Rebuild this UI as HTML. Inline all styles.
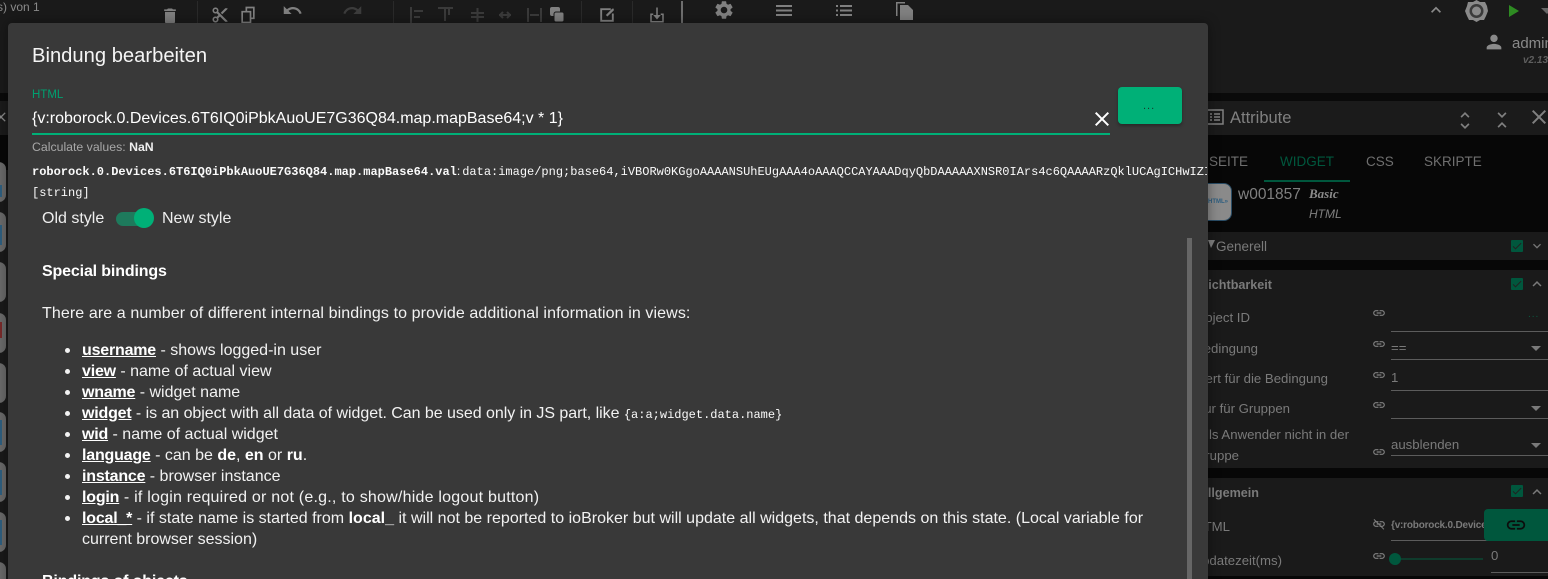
<!DOCTYPE html>
<html><head><meta charset="utf-8"><style>
html,body{margin:0;padding:0;background:#1a1a1a}
#p{position:relative;width:1548px;height:579px;overflow:hidden;background:#1a1a1a;font-family:"Liberation Sans",sans-serif}
.b{position:absolute}
.t{position:absolute;white-space:nowrap;line-height:20px;transform:translateY(-8px)}
svg.i{position:absolute;fill:#808080}
.l{color:#7a7a7a;font-size:13.2px}
.h{color:#7a7a7a;font-size:12.6px;font-weight:bold}
.ln{position:absolute;height:1px;background:#5c5c5c}
.w{color:#f2f2f2;font-size:16px;letter-spacing:0}
.w b{color:#fff}
.w u{font-weight:bold;color:#fff;letter-spacing:-.2px}
.m{font-family:"Liberation Mono",monospace;font-size:12px;color:#fafafa;letter-spacing:0}
.dot{position:absolute;left:65px;width:5px;height:5px;border-radius:50%;background:#f2f2f2}
.tile{position:absolute;left:-14px;width:20px;height:40px;border-radius:7px;background:#6a6a6a}
</style></head><body><div id="p">

<!-- background structure -->
<div class="b" style="left:0;top:93px;width:1548px;height:8px;background:#0a0a0a"></div>
<div class="b" style="left:0;top:101px;width:1548px;height:34px;background:#1b1b1b"></div>
<div class="b" style="left:0;top:135px;width:1548px;height:444px;background:#070707"></div>
<div class="b" style="left:0;top:170px;width:8px;height:409px;background:#1a1a1a"></div>
<div class="tile" style="top:162px"></div><div class="tile" style="top:212px"></div>
<div class="tile" style="top:262px"></div><div class="tile" style="top:313px"></div>
<div class="tile" style="top:363px"></div><div class="tile" style="top:412px"></div>
<div class="tile" style="top:462px"></div><div class="tile" style="top:512px"></div>
<div class="tile" style="top:562px"></div>
<div class="b" style="left:0;top:185px;width:2px;height:12px;background:#2f5f80"></div>
<div class="b" style="left:0;top:225px;width:2px;height:20px;background:#2f5f80"></div>
<div class="b" style="left:0;top:322px;width:2px;height:16px;background:#7a2a2a"></div>
<div class="b" style="left:0;top:420px;width:2px;height:25px;background:#2f5f80"></div>
<div class="b" style="left:0;top:470px;width:2px;height:25px;background:#2f5f80"></div>
<div class="b" style="left:0;top:520px;width:2px;height:25px;background:#2f5f80"></div>
<svg class="i" style="left:-7px;top:109px;fill:#8a8a8a" width="16" height="16" viewBox="0 0 24 24"><path d="M19 6.41L17.59 5 12 10.59 6.41 5 5 6.41 10.59 12 5 17.59 6.41 19 12 13.41 17.59 19 19 17.59 13.41 12z"/></svg>

<!-- top toolbar -->
<div class="t" style="left:-3px;top:5px;font-size:12px;color:#8a8a8a">s) von 1</div>
<svg class="i" style="left:160px;top:5px" width="20" height="22" viewBox="0 0 24 24"><path d="M6 19c0 1.1.9 2 2 2h8c1.1 0 2-.9 2-2V7H6v12zM19 4h-3.5l-1-1h-5l-1 1H5v2h14V4z"/></svg>
<svg class="i" style="left:211px;top:6px" width="18" height="18" viewBox="0 0 24 24"><path d="M9.64 7.64c.23-.5.36-1.05.36-1.64 0-2.21-1.79-4-4-4S2 3.79 2 6s1.79 4 4 4c.59 0 1.14-.13 1.64-.36L10 12l-2.36 2.36C7.14 14.13 6.59 14 6 14c-2.21 0-4 1.79-4 4s1.79 4 4 4 4-1.79 4-4c0-.59-.13-1.14-.36-1.64L12 14l7 7h3v-1L9.64 7.64zM6 8c-1.1 0-2-.89-2-2s.9-2 2-2 2 .89 2 2-.9 2-2 2zm0 12c-1.1 0-2-.89-2-2s.9-2 2-2 2 .89 2 2-.9 2-2 2zM19 3l-6 6 2 2 7-7V3z"/></svg>
<svg class="i" style="left:238px;top:5px" width="20" height="20" viewBox="0 0 24 24"><path d="M9 2h11v15h-4v5H4V7h5V2zm2 2v3h5v8h2V4h-7zM6 9v11h8V9H6z"/></svg>
<svg class="i" style="left:282px;top:0" width="21" height="21" viewBox="0 0 24 24"><path d="M12.5 8c-2.65 0-5.05.99-6.9 2.6L2 7v9h9l-3.62-3.62c1.39-1.16 3.16-1.88 5.12-1.88 3.54 0 6.55 2.31 7.6 5.5l2.37-.78C21.08 11.03 17.15 8 12.5 8z"/></svg>
<svg class="i" style="left:342px;top:0;fill:#3c3c3c" width="21" height="21" viewBox="0 0 24 24"><path d="M18.4 10.6C16.55 8.99 14.15 8 11.5 8c-4.65 0-8.58 3.03-9.96 7.22L3.9 16c1.05-3.19 4.05-5.5 7.6-5.5 1.95 0 3.73.72 5.12 1.88L13 16h9V7l-3.6 3.6z"/></svg>
<div class="b" style="left:197px;top:1px;width:1px;height:22px;background:#2a2a2a"></div>
<div class="b" style="left:393px;top:1px;width:1px;height:22px;background:#2a2a2a"></div>
<div class="b" style="left:581px;top:1px;width:1px;height:22px;background:#2a2a2a"></div>
<div class="b" style="left:632px;top:1px;width:1px;height:22px;background:#2a2a2a"></div>
<svg class="b" style="left:405px;top:2px" width="145" height="22" viewBox="0 0 145 22" fill="none" stroke="#3a3a3a" stroke-width="2"><path d="M6 5v16M9 9h9M9 15h6"/><path d="M33 6h15M40 7v12M44 7v6"/><path d="M66 11h13M66 15h13M72.500 6v14"/><path d="M94 13h12M95 13l3-3M95 13l3 3M105 13l-3-3M105 13l-3 3"/><path d="M123 6v14M136 6v14M125 13h9"/></svg>
<svg class="b" style="left:549px;top:6px" width="16" height="17" viewBox="0 0 16 17"><rect x="1" y="1" width="10" height="9" rx="2" fill="#808080"/><rect x="5" y="6" width="10" height="10" rx="2" fill="#808080" stroke="#1a1a1a"/></svg>
<svg class="i" style="left:598px;top:6px" width="18" height="18" viewBox="0 0 24 24"><path d="M3 3h14v2.500H5.500v13h13V10H21v11H3V3zm7.500 9L19 3.500h2V6l-8.500 8z"/></svg>
<svg class="i" style="left:648px;top:6px" width="18" height="18" viewBox="0 0 24 24"><path d="M11 2h2v10h4l-5 6-5-6h4V2zM3 10h4v2H5v8h14v-8h-2v-2h4v12H3V10z"/></svg>
<div class="b" style="left:681px;top:1px;width:2px;height:22px;background:#6e6e6e"></div>
<svg class="i" style="left:713px;top:-1px" width="22" height="22" viewBox="0 0 24 24"><path d="M19.14 12.94c.04-.3.06-.61.06-.94 0-.32-.02-.64-.07-.94l2.03-1.58c.18-.14.23-.41.12-.61l-1.92-3.32c-.12-.22-.37-.29-.59-.22l-2.39.96c-.5-.38-1.03-.7-1.62-.94l-.36-2.54c-.04-.24-.24-.41-.48-.41h-3.84c-.24 0-.43.17-.47.41l-.36 2.54c-.59.24-1.13.57-1.62.94l-2.39-.96c-.22-.08-.47 0-.59.22L2.74 8.87c-.12.21-.08.47.12.61l2.03 1.58c-.05.3-.09.63-.09.94s.02.64.07.94l-2.03 1.58c-.18.14-.23.41-.12.61l1.92 3.32c.12.22.37.29.59.22l2.39-.96c.5.38 1.03.7 1.62.94l.36 2.54c.05.24.24.41.48.41h3.84c.24 0 .44-.17.47-.41l.36-2.54c.59-.24 1.13-.56 1.62-.94l2.39.96c.22.08.47 0 .59-.22l1.92-3.32c.12-.22.07-.47-.12-.61l-2.01-1.58zM12 15.6c-1.98 0-3.6-1.62-3.6-3.6s1.62-3.6 3.6-3.6 3.6 1.62 3.6 3.6-1.62 3.6-3.6 3.6z"/></svg>
<svg class="b" style="left:776px;top:5px" width="16" height="11" viewBox="0 0 16 11" fill="#808080"><rect y="0" width="16" height="2"/><rect y="4.500" width="16" height="2"/><rect y="9" width="16" height="2"/></svg>
<svg class="b" style="left:836px;top:5px" width="16" height="11" viewBox="0 0 16 11" fill="#808080"><rect y="0" width="2" height="2"/><rect x="4" y="0" width="12" height="2"/><rect y="4.500" width="2" height="2"/><rect x="4" y="4.500" width="12" height="2"/><rect y="9" width="2" height="2"/><rect x="4" y="9" width="12" height="2"/></svg>
<svg class="i" style="left:894px;top:1px" width="20" height="20" viewBox="0 0 20 20"><path d="M2 1h9v1.500H3.500V15H2V1zM6 4h8l5 5v10H6V4z"/></svg>

<!-- top right -->
<svg class="i" style="left:1426px;top:0;fill:#8a8a8a" width="20" height="20" viewBox="0 0 24 24"><path d="M12 8l-6 6 1.41 1.41L12 10.83l4.59 4.58L18 14z"/></svg>
<svg class="b" style="left:1465px;top:0" width="23" height="22" viewBox="0 0 23 22"><polygon points="11.500,0 15,2 20,2 22,6 23,11 21,16 19,20 15,20 11.500,22 8,20 4,20 2,16 0,11 2,6 3,2 8,2" fill="#8a8a8a"/><circle cx="11.500" cy="11" r="7" fill="#3a3a3a"/><circle cx="11.500" cy="11" r="4.500" fill="#8a8a8a"/></svg>
<svg class="b" style="left:1508px;top:4px" width="12" height="14" viewBox="0 0 12 14"><path d="M1 1l10 6-10 6z" fill="#2e8b22"/></svg>
<svg class="b" style="left:1541px;top:8px" width="7" height="6" viewBox="0 0 7 6"><path d="M0 0h12l-6 6z" fill="#666"/></svg>
<svg class="i" style="left:1483px;top:31px;fill:#8a8a8a" width="22" height="22" viewBox="0 0 24 24"><path d="M12 12c2.21 0 4-1.79 4-4s-1.79-4-4-4-4 1.79-4 4 1.79 4 4 4zm0 2c-2.67 0-8 1.34-8 4v2h16v-2c0-2.66-5.33-4-8-4z"/></svg>
<div class="t" style="left:1512px;top:42px;font-size:15px;color:#8a8a8a">admin</div>
<div class="t" style="left:1523px;top:59px;font-size:10px;font-style:italic;font-weight:bold;color:#5f5f5f">v2.13.1</div>

<!-- attribute header -->
<svg class="b" style="left:1206px;top:109px" width="18" height="16" viewBox="0 0 18 16" fill="none" stroke="#808080" stroke-width="1.500"><rect x="1" y="1" width="16" height="14"/><path d="M4 5h2M8 5h6M4 8h2M8 8h6M4 11h2M8 11h6"/></svg>
<div class="t" style="left:1230px;top:116px;font-size:16.500px;color:#808080">Attribute</div>
<svg class="i" style="left:1458px;top:111px" width="14" height="12" viewBox="0 0 14 12"><path d="M7 1L2.500 5.500l1.200 1.200L7 3.400l3.300 3.300 1.200-1.200z"/></svg>
<svg class="i" style="left:1458px;top:122px" width="14" height="10" viewBox="0 0 14 10"><path d="M7 7L2.500 2.500l1.200-1.200L7 4.600l3.300-3.300 1.200 1.200z"/></svg>
<svg class="i" style="left:1495px;top:111px" width="14" height="10" viewBox="0 0 14 10"><path d="M7 7L2.500 2.500l1.200-1.200L7 4.600l3.300-3.300 1.200 1.200z"/></svg>
<svg class="i" style="left:1495px;top:121px" width="14" height="10" viewBox="0 0 14 10"><path d="M7 1L2.500 5.500l1.200 1.200L7 3.400l3.300 3.300 1.200-1.200z"/></svg>
<svg class="i" style="left:1527px;top:105px" width="24" height="24" viewBox="0 0 24 24"><path d="M19 6.41L17.59 5 12 10.59 6.41 5 5 6.41 10.59 12 5 17.59 6.41 19 12 13.41 17.59 19 19 17.59 13.41 12z"/></svg>

<!-- tabs -->
<div class="t" style="left:1209px;top:160px;font-size:13.500px;color:#6f6f6f">SEITE</div>
<div class="t" style="left:1280px;top:160px;font-size:13.500px;color:#00573d">WIDGET</div>
<div class="t" style="left:1366px;top:160px;font-size:13.500px;color:#6f6f6f">CSS</div>
<div class="t" style="left:1424px;top:160px;font-size:13.500px;color:#6f6f6f">SKRIPTE</div>
<div class="b" style="left:1264px;top:180px;width:86px;height:2px;background:#00573d"></div>

<!-- widget info -->
<div class="b" style="left:1198px;top:183px;width:32px;height:36px;background:#8a8a8a;border:1.500px solid #2a4d66;border-radius:8px"></div>
<div class="t" style="left:1208px;top:200px;font-size:6px;font-weight:bold;color:#2f5f80">HTML»</div>
<div class="t" style="left:1238px;top:193px;font-size:15.500px;color:#808080">w001857</div>
<div class="t" style="left:1309px;top:192px;font-size:13px;font-weight:bold;font-style:italic;font-family:'Liberation Serif',serif;color:#8a8a8a">Basic</div>
<div class="t" style="left:1309px;top:212px;font-size:12px;font-style:italic;color:#808080">HTML</div>

<!-- Generell -->
<div class="b" style="left:1200px;top:232px;width:348px;height:28px;background:#1a1a1a"></div>
<svg class="b" style="left:1208px;top:240px" width="7" height="8" viewBox="0 0 7 8"><path d="M0 0h7L3 8z" fill="#808080"/></svg>
<div class="t h" style="left:1216px;top:245px;font-weight:normal;font-size:13.500px">Generell</div>
<div class="b" style="left:1511px;top:240px;width:12px;height:12px;background:#00573d;border-radius:1px"></div>
<svg class="i" style="left:1511px;top:240px;fill:#222" width="12" height="12" viewBox="0 0 24 24"><path d="M9 16.17L4.83 12l-1.42 1.41L9 19 21 7l-1.41-1.41z"/></svg>
<svg class="i" style="left:1529px;top:238px;fill:#777" width="16" height="16" viewBox="0 0 24 24"><path d="M16.59 8.59L12 13.17 7.41 8.59 6 10l6 6 6-6z"/></svg>

<!-- Sichtbarkeit -->
<div class="b" style="left:1200px;top:270px;width:348px;height:198px;background:#1a1a1a"></div>
<div class="t h" style="right:276px;top:283px">Sichtbarkeit</div>
<div class="b" style="left:1511px;top:278px;width:12px;height:12px;background:#00573d;border-radius:1px"></div>
<svg class="i" style="left:1511px;top:278px;fill:#222" width="12" height="12" viewBox="0 0 24 24"><path d="M9 16.17L4.83 12l-1.42 1.41L9 19 21 7l-1.41-1.41z"/></svg>
<svg class="i" style="left:1528px;top:275px;fill:#7a7a7a" width="18" height="18" viewBox="0 0 24 24"><path d="M12 8l-6 6 1.41 1.41L12 10.83l4.59 4.58L18 14z"/></svg>
<div class="t l" style="right:298px;top:316px">Object ID</div>
<div class="t l" style="right:290px;top:347px">Bedingung</div>
<div class="t l" style="right:220px;top:377px">Wert für die Bedingung</div>
<div class="t l" style="right:258px;top:407px">Nur für Gruppen</div>
<div class="t l" style="right:199px;top:433px">Falls Anwender nicht in der</div>
<div class="t l" style="right:309px;top:454px">Gruppe</div>
<svg class="i" style="left:1372px;top:306px" width="14" height="14" viewBox="0 0 24 24"><path d="M3.9 12c0-1.71 1.39-3.1 3.1-3.1h4V7H7c-2.76 0-5 2.24-5 5s2.24 5 5 5h4v-1.9H7c-1.71 0-3.1-1.39-3.1-3.1zM8 13h8v-2H8v2zm9-6h-4v1.9h4c1.71 0 3.1 1.39 3.1 3.1s-1.39 3.1-3.1 3.1h-4V17h4c2.76 0 5-2.24 5-5s-2.24-5-5-5z"/></svg>
<svg class="i" style="left:1372px;top:337px" width="14" height="14" viewBox="0 0 24 24"><path d="M3.9 12c0-1.71 1.39-3.1 3.1-3.1h4V7H7c-2.76 0-5 2.24-5 5s2.24 5 5 5h4v-1.9H7c-1.71 0-3.1-1.39-3.1-3.1zM8 13h8v-2H8v2zm9-6h-4v1.9h4c1.71 0 3.1 1.39 3.1 3.1s-1.39 3.1-3.1 3.1h-4V17h4c2.76 0 5-2.24 5-5s-2.24-5-5-5z"/></svg>
<svg class="i" style="left:1372px;top:368px" width="14" height="14" viewBox="0 0 24 24"><path d="M3.9 12c0-1.71 1.39-3.1 3.1-3.1h4V7H7c-2.76 0-5 2.24-5 5s2.24 5 5 5h4v-1.9H7c-1.71 0-3.1-1.39-3.1-3.1zM8 13h8v-2H8v2zm9-6h-4v1.9h4c1.71 0 3.1 1.39 3.1 3.1s-1.39 3.1-3.1 3.1h-4V17h4c2.76 0 5-2.24 5-5s-2.24-5-5-5z"/></svg>
<svg class="i" style="left:1372px;top:398px" width="14" height="14" viewBox="0 0 24 24"><path d="M3.9 12c0-1.71 1.39-3.1 3.1-3.1h4V7H7c-2.76 0-5 2.24-5 5s2.24 5 5 5h4v-1.9H7c-1.71 0-3.1-1.39-3.1-3.1zM8 13h8v-2H8v2zm9-6h-4v1.9h4c1.71 0 3.1 1.39 3.1 3.1s-1.39 3.1-3.1 3.1h-4V17h4c2.76 0 5-2.24 5-5s-2.24-5-5-5z"/></svg>
<svg class="i" style="left:1372px;top:445px" width="14" height="14" viewBox="0 0 24 24"><path d="M3.9 12c0-1.71 1.39-3.1 3.1-3.1h4V7H7c-2.76 0-5 2.24-5 5s2.24 5 5 5h4v-1.9H7c-1.71 0-3.1-1.39-3.1-3.1zM8 13h8v-2H8v2zm9-6h-4v1.9h4c1.71 0 3.1 1.39 3.1 3.1s-1.39 3.1-3.1 3.1h-4V17h4c2.76 0 5-2.24 5-5s-2.24-5-5-5z"/></svg>
<div class="t" style="left:1528px;top:313px;font-size:10px;letter-spacing:1px;color:#0b5a40">...</div>
<div class="t l" style="left:1391px;top:346px">==</div>
<div class="t l" style="left:1391px;top:376px">1</div>
<div class="t l" style="left:1391px;top:443px">ausblenden</div>
<div class="ln" style="left:1391px;top:331px;width:157px"></div>
<div class="ln" style="left:1391px;top:359px;width:157px"></div>
<div class="ln" style="left:1391px;top:390px;width:157px"></div>
<div class="ln" style="left:1391px;top:418px;width:157px"></div>
<div class="ln" style="left:1391px;top:455px;width:157px"></div>
<svg class="b" style="left:1531px;top:346px" width="10" height="5" viewBox="0 0 10 5"><path d="M0 0h10L5 5z" fill="#7a7a7a"/></svg>
<svg class="b" style="left:1531px;top:406px" width="10" height="5" viewBox="0 0 10 5"><path d="M0 0h10L5 5z" fill="#7a7a7a"/></svg>
<svg class="b" style="left:1531px;top:443px" width="10" height="5" viewBox="0 0 10 5"><path d="M0 0h10L5 5z" fill="#7a7a7a"/></svg>

<!-- Allgemein -->
<div class="b" style="left:1200px;top:478px;width:348px;height:98px;background:#1a1a1a"></div>
<div class="t h" style="right:289px;top:491px">Allgemein</div>
<div class="b" style="left:1511px;top:485px;width:12px;height:12px;background:#00573d;border-radius:1px"></div>
<svg class="i" style="left:1511px;top:485px;fill:#222" width="12" height="12" viewBox="0 0 24 24"><path d="M9 16.17L4.83 12l-1.42 1.41L9 19 21 7l-1.41-1.41z"/></svg>
<svg class="i" style="left:1528px;top:483px;fill:#7a7a7a" width="18" height="18" viewBox="0 0 24 24"><path d="M12 8l-6 6 1.41 1.41L12 10.83l4.59 4.58L18 14z"/></svg>
<div class="t l" style="right:318px;top:525px">HTML</div>
<div class="t l" style="right:266px;top:559px">Updatezeit(ms)</div>
<svg class="i" style="left:1372px;top:517px" width="14" height="14" viewBox="0 0 24 24"><path d="M3.9 12c0-1.71 1.39-3.1 3.1-3.1h4V7H7c-2.76 0-5 2.24-5 5s2.24 5 5 5h4v-1.9H7c-1.71 0-3.1-1.39-3.1-3.1zM8 13h8v-2H8v2zm9-6h-4v1.9h4c1.71 0 3.1 1.39 3.1 3.1s-1.39 3.1-3.1 3.1h-4V17h4c2.76 0 5-2.24 5-5s-2.24-5-5-5z"/><path d="M4 3.500L21 20.500l-1.200 1.200L2.800 4.700z"/></svg>
<svg class="i" style="left:1372px;top:549px" width="14" height="14" viewBox="0 0 24 24"><path d="M3.9 12c0-1.71 1.39-3.1 3.1-3.1h4V7H7c-2.76 0-5 2.24-5 5s2.24 5 5 5h4v-1.9H7c-1.71 0-3.1-1.39-3.1-3.1zM8 13h8v-2H8v2zm9-6h-4v1.9h4c1.71 0 3.1 1.39 3.1 3.1s-1.39 3.1-3.1 3.1h-4V17h4c2.76 0 5-2.24 5-5s-2.24-5-5-5z"/></svg>
<div class="t" style="left:1391px;top:524px;font-size:10px;font-weight:bold;letter-spacing:-.2px;color:#7a7a7a">{v:roborock.0.Device</div>
<div class="ln" style="left:1391px;top:540px;width:157px"></div>
<div class="b" style="left:1484px;top:509px;width:64px;height:32px;background:#00573d;border-radius:4px 0 0 4px"></div>
<svg class="i" style="left:1505px;top:514px;fill:#0c0c0c" width="22" height="22" viewBox="0 0 24 24"><path d="M3.9 12c0-1.71 1.39-3.1 3.1-3.1h4V7H7c-2.76 0-5 2.24-5 5s2.24 5 5 5h4v-1.9H7c-1.71 0-3.1-1.39-3.1-3.1zM8 13h8v-2H8v2zm9-6h-4v1.9h4c1.71 0 3.1 1.39 3.1 3.1s-1.39 3.1-3.1 3.1h-4V17h4c2.76 0 5-2.24 5-5s-2.24-5-5-5z"/></svg>
<div class="b" style="left:1395px;top:558px;width:88px;height:2px;background:#0f3b2c"></div>
<div class="b" style="left:1389px;top:553px;width:12px;height:12px;border-radius:50%;background:#00573d"></div>
<div class="t l" style="left:1491px;top:554px">0</div>
<div class="ln" style="left:1491px;top:572px;width:57px"></div>

<!-- dialog -->
<div class="b" style="left:8px;top:23px;width:1200px;height:580px;background:#393939;border-radius:4px;overflow:hidden;box-shadow:0 0 12px rgba(0,0,0,.4)"></div>
<div class="b" style="left:8px;top:23px;width:1200px;height:556px;overflow:hidden">
  <div class="b" style="left:1179px;top:215px;width:5px;height:341px;background:#666"></div>
  <div class="t m" style="left:24px;top:146px;width:1175px;overflow:hidden;line-height:20px"><b>roborock.0.Devices.6T6IQ0iPbkAuoUE7G36Q84.map.mapBase64.val</b><span style="font-family:'Liberation Sans',sans-serif;margin-right:2px">:</span>data:image/png;base64,iVBORw0KGgoAAAANSUhEUgAAA4oAAAQCCAYAAADqyQbDAAAAAXNSR0IArs4c6QAAAARzQklUCAgICHwIZIjAAAAgAElEQVR4nOzdd3wU1f7</div>
</div>
<div class="t" style="left:32px;top:54px;font-size:20.200px;color:#f5f5f5">Bindung bearbeiten</div>
<div class="t" style="left:32px;top:93px;font-size:11.500px;color:#00a070">HTML</div>
<div class="t" style="left:32px;top:117px;font-size:16px;color:#fff">{v:roborock.0.Devices.6T6IQ0iPbkAuoUE7G36Q84.map.mapBase64;v * 1}</div>
<div class="b" style="left:32px;top:133px;width:1078px;height:2px;background:#00b077"></div>
<svg class="i" style="left:1090px;top:107px;fill:#fff" width="24" height="24" viewBox="0 0 24 24"><path d="M19 6.41L17.59 5 12 10.59 6.41 5 5 6.41 10.59 12 5 17.59 6.41 19 12 13.41 17.59 19 19 17.59 13.41 12z"/></svg>
<div class="b" style="left:1118px;top:87px;width:64px;height:37px;background:#00b077;border-radius:4px;box-shadow:0 2px 3px rgba(0,0,0,.3)"></div>
<div class="t" style="left:1143px;top:104px;font-size:11px;letter-spacing:1px;color:#1a3a2c">...</div>
<div class="t" style="left:32px;top:145px;font-size:12.300px;color:#a8a8a8">Calculate values: <b style="color:#eee">NaN</b></div>
<div class="t m" style="left:32px;top:191px">[string]</div>

<div class="t w" style="left:42px;top:217px;color:#eee">Old style</div>
<div class="b" style="left:116px;top:212px;width:34px;height:14px;border-radius:7px;background:#1e7a5c"></div>
<div class="b" style="left:134px;top:208px;width:20px;height:20px;border-radius:50%;background:#00b077"></div>
<div class="t w" style="left:162px;top:217px;color:#eee">New style</div>

<div class="t w" style="left:42px;top:270px;letter-spacing:-.15px"><b>Special bindings</b></div>
<div class="t w" style="left:42px;top:312px;letter-spacing:.1px">There are a number of different internal bindings to provide additional information in views:</div>

<div class="dot" style="top:348px"></div><div class="t w" style="left:82px;top:349px"><u>username</u> - shows logged-in user</div>
<div class="dot" style="top:369px"></div><div class="t w" style="left:82px;top:370px"><u>view</u> - name of actual view</div>
<div class="dot" style="top:390px"></div><div class="t w" style="left:82px;top:391px"><u>wname</u> - widget name</div>
<div class="dot" style="top:411px"></div><div class="t w" style="left:82px;top:412px;letter-spacing:-.04px"><u>widget</u> - is an object with all data of widget. Can be used only in JS part, like <span class="m">{a:a;widget.data.name}</span></div>
<div class="dot" style="top:432px"></div><div class="t w" style="left:82px;top:433px"><u>wid</u> - name of actual widget</div>
<div class="dot" style="top:453px"></div><div class="t w" style="left:82px;top:454px"><u>language</u> - can be <b>de</b>, <b>en</b> or <b>ru</b>.</div>
<div class="dot" style="top:474px"></div><div class="t w" style="left:82px;top:475px"><u>instance</u> - browser instance</div>
<div class="dot" style="top:495px"></div><div class="t w" style="left:82px;top:496px;letter-spacing:.22px"><u>login</u> - if login required or not (e.g., to show/hide logout button)</div>
<div class="dot" style="top:516px"></div><div class="t w" style="left:82px;top:517px;letter-spacing:.01px"><u>local_*</u> - if state name is started from <b>local_</b> it will not be reported to ioBroker but will update all widgets, that depends on this state. (Local variable for</div>
<div class="t w" style="left:82px;top:538px">current browser session)</div>
<div class="t w" style="left:42px;top:580px;letter-spacing:-.15px"><b>Bindings of objects</b></div>

</div></body></html>
